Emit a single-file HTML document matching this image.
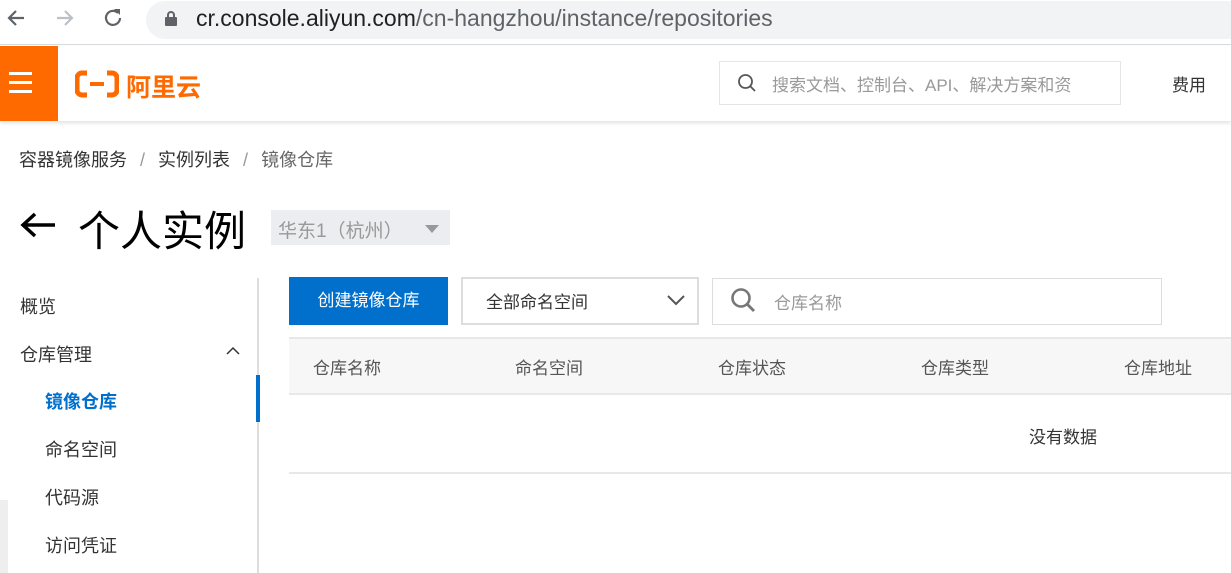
<!DOCTYPE html>
<html><head><meta charset="utf-8"><style>
*{margin:0;padding:0;box-sizing:border-box}
body{width:1231px;height:573px;overflow:hidden;background:#fff;position:relative;font-family:"Liberation Sans","Noto Sans CJK SC",sans-serif;color:#333}
.a{position:absolute;white-space:nowrap}
</style></head><body>
<div class="a" style="left:0;top:0;width:1231px;height:45px;background:#fff;border-bottom:1px solid #dadce0"></div>
<svg class="a" style="left:4px;top:6px" width="120" height="24" viewBox="0 0 120 24">
<path d="M20 12H6M12 5l-7 7 7 7" stroke="#5f6368" stroke-width="2.2" fill="none"/>
<path d="M53 12h14M61 5l7 7-7 7" stroke="#bdc1c6" stroke-width="2.2" fill="none"/>
<path d="M116 12a7 7 0 1 1-2-5" stroke="#5f6368" stroke-width="2.2" fill="none"/><path d="M110 3h6v6z" fill="#5f6368"/>
</svg>
<div class="a" style="left:146px;top:1px;width:1100px;height:38px;border-radius:19px;background:#f1f3f4"></div>
<svg class="a" style="left:164px;top:10px" width="14" height="16"><rect x="1" y="7" width="12" height="9" rx="1" fill="#5f6368"/><path d="M4 7V5a3 3 0 0 1 6 0v2" stroke="#5f6368" stroke-width="2" fill="none"/></svg>
<div class="a" style="left:196px;top:5px;font-size:23px;color:#202124">cr.console.aliyun.com<span style="color:#5f6368">/cn-hangzhou/instance/repositories</span></div>
<div class="a" style="left:0;top:46px;width:1231px;height:75px;background:#fff;box-shadow:0 2px 4px rgba(0,0,0,.12)"></div>
<div class="a" style="left:0;top:46px;width:58px;height:75px;background:#ff6a00"></div>
<div class="a" style="left:9px;top:72px;width:23px;height:3px;background:#fff"></div>
<div class="a" style="left:9px;top:81px;width:23px;height:3px;background:#fff"></div>
<div class="a" style="left:9px;top:90px;width:23px;height:3px;background:#fff"></div>
<svg class="a" style="left:75px;top:70px" width="44" height="28"><path d="M12 3H7a5 5 0 0 0-5 5v12a5 5 0 0 0 5 5h5M32 3h5a5 5 0 0 1 5 5v12a5 5 0 0 1-5 5h-5" stroke="#ff6a00" stroke-width="5" fill="none"/><rect x="15" y="12" width="14" height="4" fill="#ff6a00"/></svg>
<div class="a" style="left:126px;top:68px;font-size:25px;font-weight:bold;color:#ff6a00">阿里云</div>
<div class="a" style="left:719px;top:61px;width:402px;height:44px;border:1px solid #e5e5e5;background:#fff"></div>
<svg class="a" style="left:737px;top:73px" width="20" height="20"><circle cx="8.5" cy="8.5" r="6.5" stroke="#555" stroke-width="1.8" fill="none"/><path d="M13 13l5 5" stroke="#555" stroke-width="1.8"/></svg>
<div class="a" style="left:772px;top:71px;font-size:17px;color:#999">搜索文档、控制台、API、解决方案和资</div>
<div class="a" style="left:1172px;top:71px;font-size:17px;color:#333">费用</div>
<div class="a" style="left:19px;top:146px;font-size:18px;color:#333">容器镜像服务 <span style="color:#999;margin:0 8px">/</span> 实例列表 <span style="color:#999;margin:0 8px">/</span> <span style="color:#666">镜像仓库</span></div>
<svg class="a" style="left:19px;top:211px" width="38" height="28"><path d="M36 14H4M16 3L4 14l12 11" stroke="#000" stroke-width="3.5" fill="none"/></svg>
<div class="a" style="left:78px;top:198px;font-size:42px;color:#000">个人实例</div>
<div class="a" style="left:271px;top:210px;width:179px;height:35px;background:#ebedf0"></div>
<div class="a" style="left:278px;top:216px;font-size:19px;color:#999">华东1（杭州）</div>
<svg class="a" style="left:424px;top:224px" width="16" height="10"><path d="M1 1h14L8 9z" fill="#999"/></svg>
<div class="a" style="left:257px;top:278px;width:2px;height:295px;background:#ddd"></div>
<div class="a" style="left:256px;top:375px;width:4px;height:47px;background:#0070cc"></div>
<div class="a" style="left:20px;top:293px;font-size:18px">概览</div>
<div class="a" style="left:20px;top:341px;font-size:18px">仓库管理</div>
<svg class="a" style="left:226px;top:346px" width="14" height="10"><path d="M1 8l6-6 6 6" stroke="#333" stroke-width="1.5" fill="none"/></svg>
<div class="a" style="left:45px;top:388px;font-size:18px;color:#0070cc;font-weight:bold">镜像仓库</div>
<div class="a" style="left:45px;top:436px;font-size:18px">命名空间</div>
<div class="a" style="left:45px;top:484px;font-size:18px">代码源</div>
<div class="a" style="left:45px;top:532px;font-size:18px">访问凭证</div>
<div class="a" style="left:0;top:500px;width:8px;height:73px;background:#eee"></div>
<div class="a" style="left:289px;top:277px;width:159px;height:48px;background:#0070cc;color:#fff;font-size:17px;text-align:center;line-height:48px">创建镜像仓库</div>
<div class="a" style="left:461px;top:277px;width:238px;height:48px;border:2px solid #ddd"></div>
<div class="a" style="left:486px;top:288px;font-size:17px">全部命名空间</div>
<svg class="a" style="left:666px;top:294px" width="20" height="12"><path d="M2 2l8 8 8-8" stroke="#555" stroke-width="2" fill="none"/></svg>
<div class="a" style="left:712px;top:278px;width:450px;height:47px;border:1px solid #ddd"></div>
<svg class="a" style="left:730px;top:287px" width="28" height="28"><circle cx="11" cy="11" r="8.5" stroke="#777" stroke-width="2.6" fill="none"/><path d="M17 17l7 7" stroke="#777" stroke-width="2.8"/></svg>
<div class="a" style="left:774px;top:289px;font-size:17px;color:#999">仓库名称</div>
<div class="a" style="left:289px;top:337px;width:942px;height:58px;background:#f7f7f7;border-top:2px solid #e8e8e8;border-bottom:2px solid #e8e8e8"></div>
<div class="a" style="left:313px;top:354px;font-size:17px;color:#555">仓库名称</div>
<div class="a" style="left:515px;top:354px;font-size:17px;color:#555">命名空间</div>
<div class="a" style="left:718px;top:354px;font-size:17px;color:#555">仓库状态</div>
<div class="a" style="left:921px;top:354px;font-size:17px;color:#555">仓库类型</div>
<div class="a" style="left:1124px;top:354px;font-size:17px;color:#555">仓库地址</div>
<div class="a" style="left:1029px;top:423px;font-size:17px;color:#333">没有数据</div>
<div class="a" style="left:289px;top:472px;width:942px;height:2px;background:#e8e8e8"></div>
</body></html>
